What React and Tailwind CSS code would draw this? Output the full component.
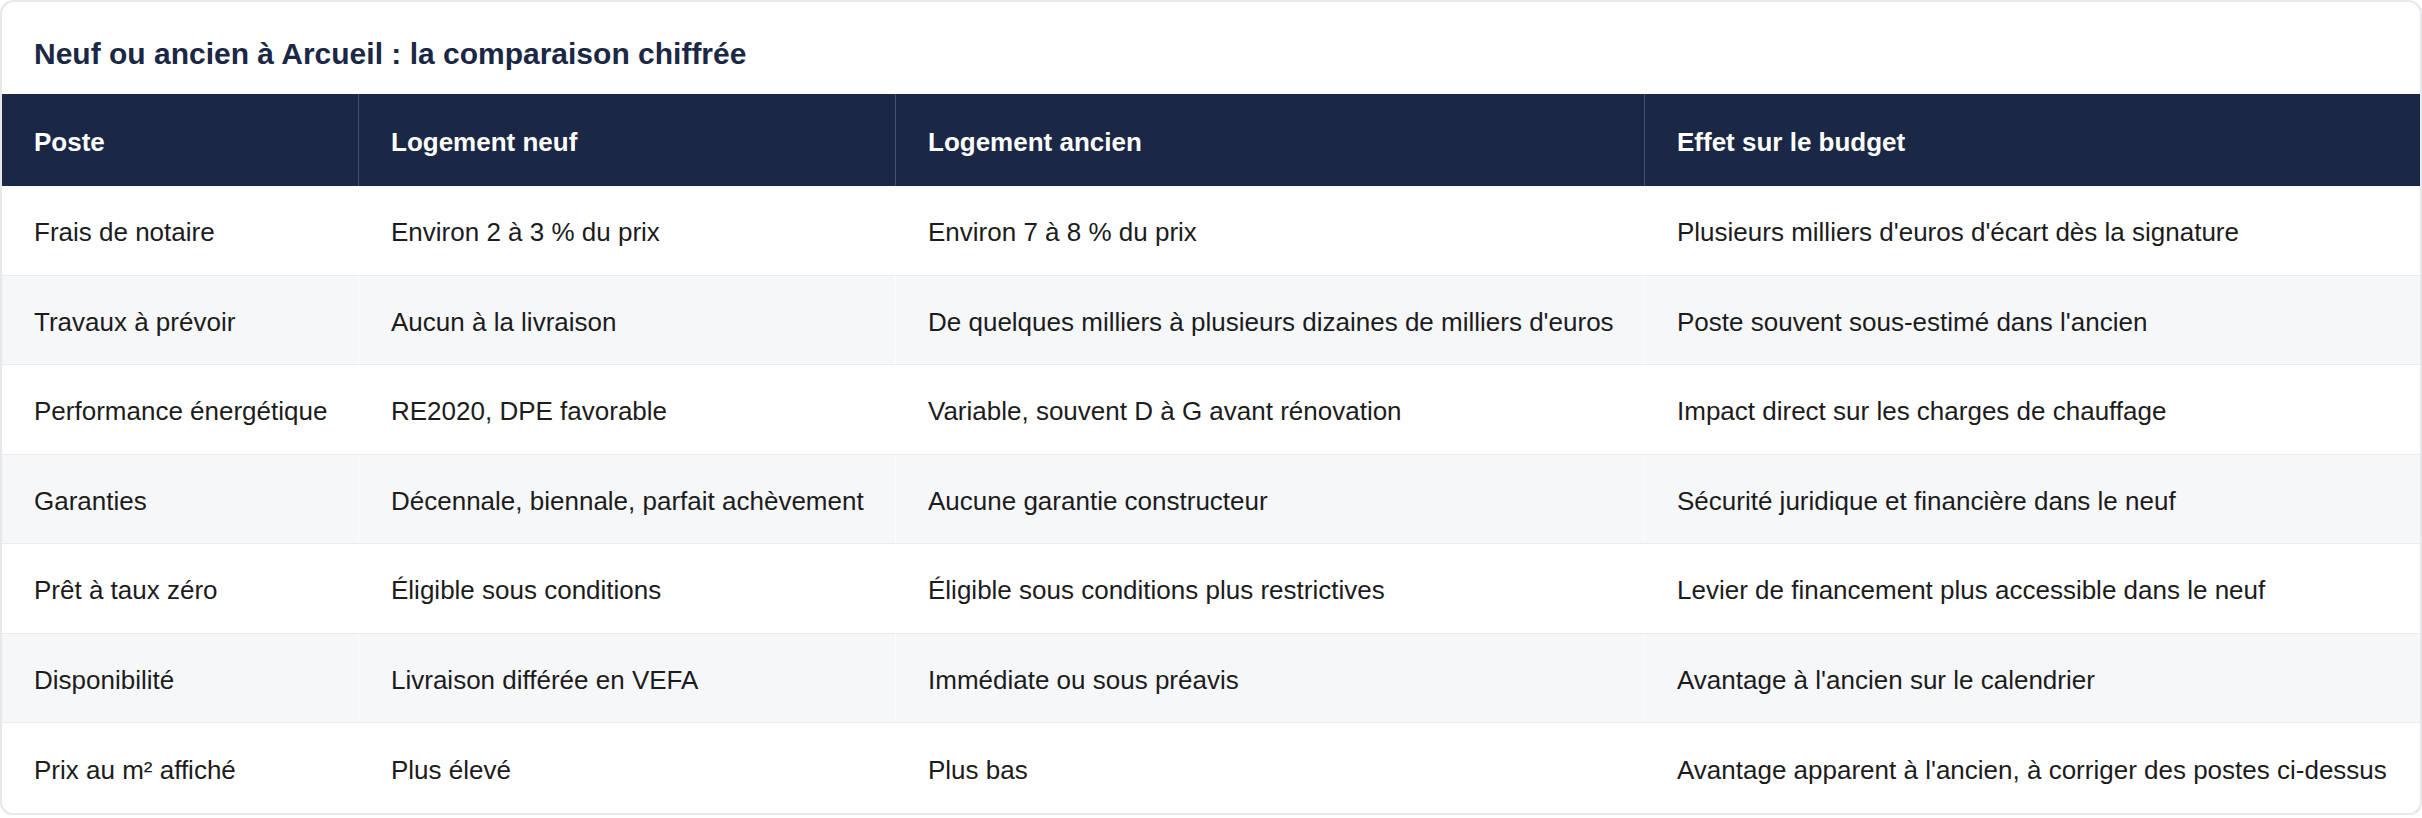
const rows = [
  ["Frais de notaire", "Environ 2 à 3 % du prix", "Environ 7 à 8 % du prix", "Plusieurs milliers d'euros d'écart dès la signature"],
  ["Travaux à prévoir", "Aucun à la livraison", "De quelques milliers à plusieurs dizaines de milliers d'euros", "Poste souvent sous-estimé dans l'ancien"],
  ["Performance énergétique", "RE2020, DPE favorable", "Variable, souvent D à G avant rénovation", "Impact direct sur les charges de chauffage"],
  ["Garanties", "Décennale, biennale, parfait achèvement", "Aucune garantie constructeur", "Sécurité juridique et financière dans le neuf"],
  ["Prêt à taux zéro", "Éligible sous conditions", "Éligible sous conditions plus restrictives", "Levier de financement plus accessible dans le neuf"],
  ["Disponibilité", "Livraison différée en VEFA", "Immédiate ou sous préavis", "Avantage à l'ancien sur le calendrier"],
  ["Prix au m² affiché", "Plus élevé", "Plus bas", "Avantage apparent à l'ancien, à corriger des postes ci-dessus"],
];

const headers = ["Poste", "Logement neuf", "Logement ancien", "Effet sur le budget"];

const cols = "grid grid-cols-[357px_537px_749px_1fr]";

export default function App() {
  return (
    <div className="bg-white font-['Liberation_Sans',Arial,sans-serif]">
      <div className="rounded-[14px] border-2 border-[#e6e8ec] bg-white overflow-hidden shadow-[0_2px_3px_rgba(15,23,42,0.06)]">
        <h2 className="px-[32px] pt-[34px] pb-[22px] text-[30px] leading-[36px] font-bold text-[#1b2845]">
          Neuf ou ancien à Arcueil : la comparaison chiffrée
        </h2>
        <div className={`${cols} h-[92px] bg-[#1b2845]`}>
          {headers.map((h, i) => (
            <div
              key={h}
              className={`flex items-center px-[32px] pt-[5px] whitespace-nowrap text-[26px] font-bold text-white ${i < 3 ? "border-r border-[#44536f]" : ""}`}
            >
              {h}
            </div>
          ))}
        </div>
        {rows.map((r, ri) => (
          <div
            key={r[0]}
            className={`${cols} h-[89.5px] ${ri % 2 === 1 ? "bg-[#f6f7f9]" : "bg-white"} ${ri < rows.length - 1 ? "border-b border-[#e9ebef]" : ""}`}
          >
            {r.map((c, ci) => (
              <div
                key={ci}
                className={`flex items-center px-[32px] pt-[5px] whitespace-nowrap text-[26px] text-[#1c1c1c] ${ci < 3 ? "border-r border-white/70" : ""}`}
              >
                {c}
              </div>
            ))}
          </div>
        ))}
      </div>
    </div>
  );
}
